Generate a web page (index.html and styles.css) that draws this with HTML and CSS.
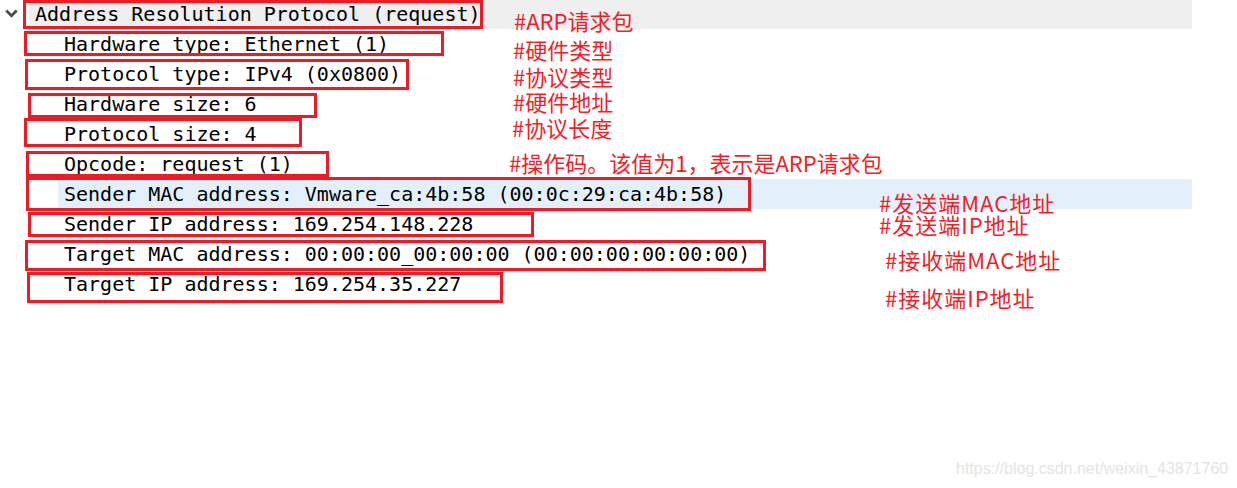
FILE: index.html
```html
<!DOCTYPE html>
<html lang="zh-CN">
<head>
<meta charset="utf-8">
<title>ARP request</title>
<link rel="stylesheet" href="styles.css">
</head>
<body>
<div class="canvas">
  <div class="tree">
    <div class="row row-top">
      <span class="toggle">
        <svg width="13" height="9" viewBox="0 0 13 9"><path d="M1.3 1.5 L6.5 6.7 L11.7 1.5" fill="none" stroke="#4d4d4d" stroke-width="2.8"/></svg>
      </span>
      <span class="label label-top">Address Resolution Protocol (request)</span>
    </div>
    <div class="row"><span class="label">Hardware type: Ethernet (1)</span></div>
    <div class="row"><span class="label">Protocol type: IPv4 (0x0800)</span></div>
    <div class="row"><span class="label">Hardware size: 6</span></div>
    <div class="row"><span class="label">Protocol size: 4</span></div>
    <div class="row"><span class="label">Opcode: request (1)</span></div>
    <div class="row"><span class="label selected">Sender MAC address: Vmware_ca:4b:58 (00:0c:29:ca:4b:58)</span></div>
    <div class="row"><span class="label">Sender IP address: 169.254.148.228</span></div>
    <div class="row"><span class="label">Target MAC address: 00:00:00_00:00:00 (00:00:00:00:00:00)</span></div>
    <div class="row"><span class="label">Target IP address: 169.254.35.227</span></div>
  </div>

  <div class="marks">
    <div class="box" style="left:23px;top:0px;width:460px;height:29px"></div>
    <div class="box" style="left:24px;top:31px;width:420px;height:25px"></div>
    <div class="box" style="left:25px;top:59px;width:384px;height:31px"></div>
    <div class="box" style="left:28px;top:93px;width:289px;height:25px"></div>
    <div class="box" style="left:24px;top:118px;width:278px;height:29px"></div>
    <div class="box" style="left:26px;top:151px;width:303px;height:26px"></div>
    <div class="box" style="left:26px;top:177px;width:725px;height:34px"></div>
    <div class="box" style="left:28px;top:212px;width:506px;height:25px"></div>
    <div class="box" style="left:25px;top:240px;width:741px;height:31px"></div>
    <div class="box" style="left:27px;top:272px;width:476px;height:31px"></div>

    <div class="note" style="left:514px;top:11px">#ARP请求包</div>
    <div class="note" style="left:513px;top:40px">#硬件类型</div>
    <div class="note" style="left:513px;top:67px">#协议类型</div>
    <div class="note" style="left:513px;top:92px">#硬件地址</div>
    <div class="note" style="left:512px;top:118px">#协议长度</div>
    <div class="note" style="left:509px;top:153px">#操作码。该值为1，表示是ARP请求包</div>
    <div class="note wide" style="left:879px;top:193px">#发送端MAC地址</div>
    <div class="note wide" style="left:879px;top:215px">#发送端IP地址</div>
    <div class="note wide" style="left:885px;top:250px">#接收端MAC地址</div>
    <div class="note wide" style="left:885px;top:288px">#接收端IP地址</div>
  </div>

  <div class="watermark">https://blog.csdn.net/weixin_43871760</div>
</div>
</body>
</html>
```

FILE: styles.css
```css
html, body {
  margin: 0;
  padding: 0;
  background: #ffffff;
}

.canvas {
  position: relative;
  width: 1237px;
  height: 488px;
  overflow: hidden;
}

.tree {
  display: flex;
  flex-direction: column;
  margin-top: -1px;
  font-family: "DejaVu Sans Mono", "Liberation Mono", monospace;
  font-size: 20px;
  color: #000;
}

.row {
  display: flex;
  height: 30px;
  line-height: 30px;
  padding-left: 58px;
}

.row-top {
  padding-left: 0;
}

.toggle {
  width: 29px;
  display: flex;
  align-items: center;
  padding-left: 5px;
  padding-bottom: 1px;
  box-sizing: border-box;
}

.toggle svg {
  display: block;
}

.label {
  flex: 0 0 auto;
  width: 1134px;
  box-sizing: border-box;
  padding-left: 6px;
  white-space: pre;
}

.label-top {
  width: 1163px;
  background: #efefef;
}

.selected {
  background: #e3f0fb;
}

.marks {
  position: absolute;
  inset: 0;
  pointer-events: none;
}

.box {
  position: absolute;
  box-sizing: border-box;
  border: 3px solid #ed1c24;
}

.note {
  position: absolute;
  font-family: "Noto Sans CJK SC", "Noto Sans", sans-serif;
  font-size: 22px;
  line-height: 18px;
  color: #f01e28;
  white-space: nowrap;
}

.note.wide {
  letter-spacing: 1px;
}

.watermark {
  position: absolute;
  left: 956px;
  top: 460px;
  font-family: "Liberation Sans", Arial, sans-serif;
  font-size: 16px;
  line-height: 18px;
  color: #e4e4e4;
  white-space: nowrap;
}
```
